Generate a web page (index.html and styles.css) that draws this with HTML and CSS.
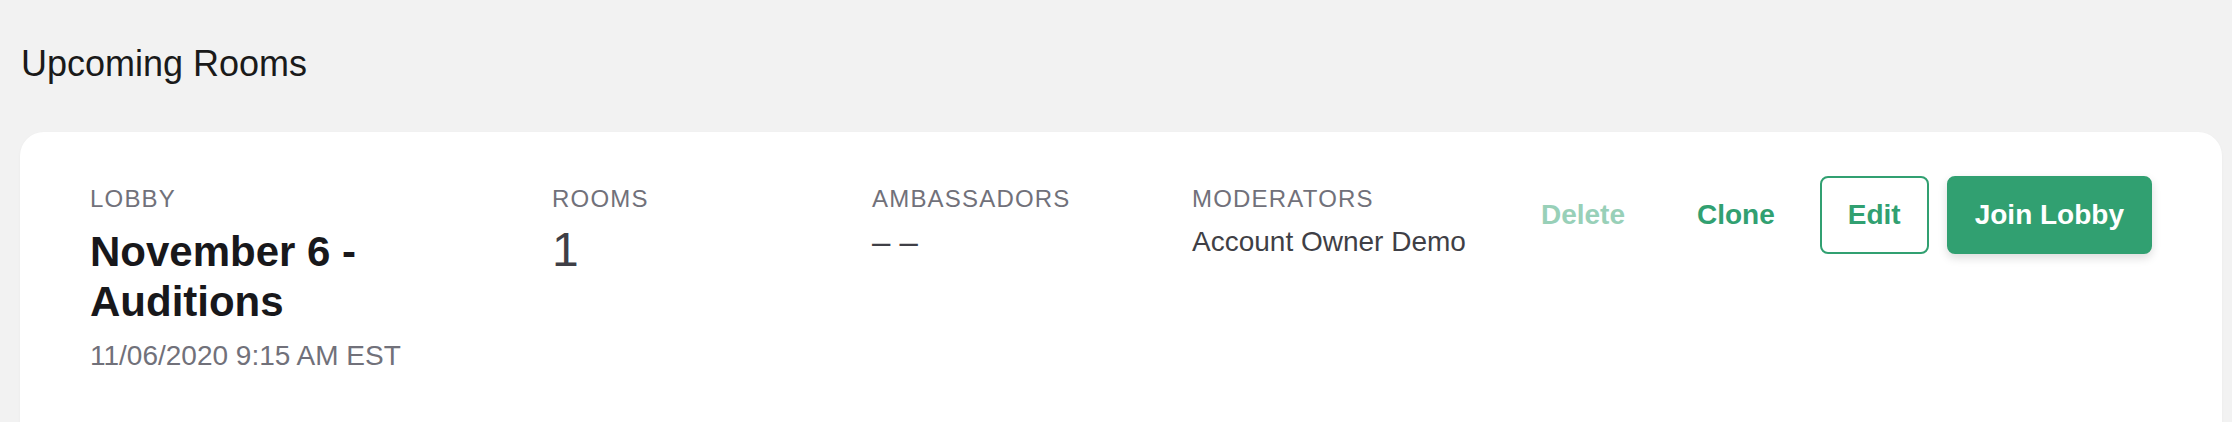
FILE: index.html
```html
<!DOCTYPE html>
<html lang="en">
<head>
<meta charset="utf-8">
<title>Upcoming Rooms</title>
<link rel="stylesheet" href="styles.css">
</head>
<body>
<main class="page">
  <h1 class="page-title">Upcoming Rooms</h1>
  <section class="card">
    <div class="col col-lobby">
      <div class="label">LOBBY</div>
      <div class="lobby-name">November 6 - Auditions</div>
      <div class="lobby-date">11/06/2020 9:15 AM EST</div>
    </div>
    <div class="col col-stat">
      <div class="label">ROOMS</div>
      <div class="big-value">1</div>
    </div>
    <div class="col col-stat">
      <div class="label">AMBASSADORS</div>
      <div class="value empty">– –</div>
    </div>
    <div class="col col-stat">
      <div class="label">MODERATORS</div>
      <div class="value">Account Owner Demo</div>
    </div>
    <div class="actions">
      <button class="btn btn-text btn-disabled" type="button">Delete</button>
      <button class="btn btn-text" type="button">Clone</button>
      <button class="btn btn-outline" type="button">Edit</button>
      <button class="btn btn-primary" type="button">Join Lobby</button>
    </div>
  </section>
</main>
</body>
</html>
```
FILE: styles.css
```css
html, body {
  margin: 0;
  padding: 0;
  background: #f2f2f2;
}

body {
  font-family: "Liberation Sans", Arial, Helvetica, sans-serif;
  color: #18181b;
  overflow: hidden;
}

.page {
  padding: 40px 10px 0 20px;
}

.page-title {
  margin: 0;
  font-size: 36px;
  line-height: 48px;
  font-weight: 400;
  color: #1a1a1a;
  padding-left: 1px;
}

.card {
  margin-top: 44px;
  background: #ffffff;
  border-radius: 24px;
  padding: 44px 70px 90px 70px;
  display: flex;
  align-items: flex-start;
  box-shadow: 0 1px 3px rgba(0, 0, 0, 0.04);
}

.col {
  flex: none;
  padding-top: 7px;
  box-sizing: border-box;
}

.col-lobby {
  width: 462px;
  padding-right: 20px;
}

.col-stat {
  width: 320px;
}

.label {
  font-size: 24px;
  line-height: 32px;
  letter-spacing: 1.2px;
  color: #71717a;
}

.lobby-name {
  margin-top: 12px;
  font-size: 42px;
  line-height: 50px;
  font-weight: 700;
  color: #18181b;
}

.lobby-date {
  margin-top: 9px;
  font-size: 28px;
  line-height: 40px;
  color: #71717a;
}

.big-value {
  margin-top: 11px;
  font-size: 48px;
  line-height: 48px;
  color: #3f3f46;
}

.value {
  margin-top: 7px;
  font-size: 28px;
  line-height: 40px;
  color: #3f3f46;
}

.value.empty {
  font-size: 33px;
}

.actions {
  flex: none;
  margin-left: auto;
  display: flex;
  gap: 18px;
}

.btn {
  font-family: "Liberation Sans", Arial, Helvetica, sans-serif;
  font-size: 28px;
  font-weight: 700;
  line-height: 74px;
  height: 78px;
  padding: 0 26px;
  border: 2px solid transparent;
  border-radius: 8px;
  background: transparent;
  color: #31a071;
  cursor: pointer;
  box-sizing: border-box;
  white-space: nowrap;
}

.btn-text {
  padding: 0 25px;
}

.btn-disabled {
  color: #98d0b8;
}

.btn-outline {
  border-color: #31a071;
  background: #ffffff;
}

.btn-primary {
  background: #31a071;
  border-color: #31a071;
  color: #ffffff;
  box-shadow: 0 4px 10px rgba(0, 0, 0, 0.14);
}
```
